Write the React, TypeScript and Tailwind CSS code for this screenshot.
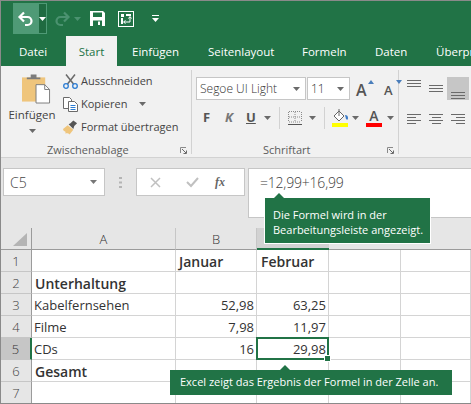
const ui = "font-['Open_Sans','Noto_Sans',sans-serif]";

const Caret = ({ color = "#6a6a6a" }: { color?: string }) => (
  <svg width="7" height="4" viewBox="0 0 7 4" className="shrink-0">
    <path d="M0 0h7L3.5 4z" fill={color} />
  </svg>
);

const Undo = ({ color, flip }: { color: string; flip?: boolean }) => (
  <svg width="17" height="16" viewBox="0 0 17 16" style={flip ? { transform: "scaleX(-1)" } : undefined}>
    <path d="M7 1.5 2.5 6 7 10.5M3 6h7.5a4 4 0 0 1 0 8H8" fill="none" stroke={color} strokeWidth="2.2" />
  </svg>
);

const SaveIcon = () => (
  <svg width="15" height="15" viewBox="0 0 15 15">
    <path fillRule="evenodd" fill="#fff" d="M0 0h13l2 2v13H0zM3 1.500v4.500h9V1.500zM3 9.500V15h9V9.500zM8 10.500h2V14H8z" />
  </svg>
);

const TouchIcon = () => (
  <svg width="16" height="16" viewBox="0 0 16 16">
    <rect x=".5" y=".5" width="15" height="15" fill="none" stroke="#fff" />
    <path d="M3 3h3v3H3zM8 3h5v2H8zM3 7h2v6H3z" fill="#fff" />
    <path d="M6 11h6V6M10.500 7.500 12 5.500l1.500 2M7.500 9.500 5.500 11l2 1.500" fill="none" stroke="#fff" />
  </svg>
);

const PasteIcon = () => (
  <svg width="29" height="30" viewBox="0 0 30 30">
    <path d="M0 3h24v25H0z" fill="#efc57c" />
    <path d="M5 5h14V3h-4V0H9v3H5z" fill="#7b7b7b" />
    <path d="M14.500 10.500h9l5 5v14h-14z" fill="#fff" stroke="#7b7b7b" />
    <path d="M23.500 10.500v5h5" fill="none" stroke="#7b7b7b" />
  </svg>
);

const ScissorsIcon = () => (
  <svg width="15" height="15" viewBox="0 0 15 15">
    <path d="M3 0.500 10.500 10M12 0.500 4.500 10" stroke="#6a6a6a" strokeWidth="1.500" fill="none" />
    <circle cx="3" cy="12" r="2.300" fill="none" stroke="#2b7cd3" strokeWidth="1.300" />
    <circle cx="12" cy="12" r="2.300" fill="none" stroke="#2b7cd3" strokeWidth="1.300" />
  </svg>
);

const CopyIcon = () => (
  <svg width="15" height="15" viewBox="0 0 15 15">
    <path d="M.5.500h6l2 2v9h-8z" fill="#fff" stroke="#6a6a6a" />
    <path d="M5.500 4.500h6l3 3v7h-9z" fill="#fff" stroke="#6a6a6a" />
    <path d="M7.500 8.500h5M7.500 10.500h5M7.500 12.500h5" stroke="#2b7cd3" />
  </svg>
);

const BrushIcon = () => (
  <svg width="16" height="15" viewBox="0 0 16 15">
    <path d="M0 9 5 5l6 5-4 5C5 13 3 14 2 14c1-1 1-2 0-2.500-.6-.3-1.500 0-2-2.500z" fill="#efc57c" />
    <path d="M6 4l2-1 3-3 4 3-3 3-1 3z" fill="#555" />
  </svg>
);

const Launcher = () => (
  <svg width="7" height="7" viewBox="0 0 7 7" className="shrink-0">
    <path d="M.5 6V.5H6" fill="none" stroke="#8a8a8a" />
    <path d="M2 2l4 4M3.500 6.500h3v-3" fill="none" stroke="#6a6a6a" />
  </svg>
);

const GrowIcon = ({ small }: { small?: boolean }) => (
  <div className="relative w-[18px] h-[18px] flex items-end">
    <span className={`${small ? "text-[13px]" : "text-[16px]"} leading-[16px] font-semibold text-[#555555]`}>A</span>
    <svg width="6" height="4" viewBox="0 0 6 4" className="absolute right-0 top-0">
      <path d={small ? "M0 0h6L3 4z" : "M0 4h6L3 0z"} fill="#4a7ebb" />
    </svg>
  </div>
);

const Lines = ({ rows }: { rows: number[][] }) => (
  <svg width="15" height="15" viewBox="0 0 15 15">
    {rows.map((r, i) => (
      <rect key={i} x={r[0]} y={r[1]} width={r[2]} height="1" fill="#6a6a6a" />
    ))}
  </svg>
);

const tabs = [
  { label: "Datei", w: "w-[65px]", pad: "pl-[18px]" },
  { label: "Start", w: "w-[51px]", pad: "justify-center" },
  { label: "Einfügen", w: "w-[91px]", pad: "pl-[15px]" },
  { label: "Seitenlayout", w: "w-[94px]", pad: "" },
  { label: "Formeln", w: "w-[73px]", pad: "" },
  { label: "Daten", w: "w-[61px]", pad: "" },
  { label: "Überprüfen", w: "w-[80px]", pad: "" },
];

const rowsData = [
  { n: "1", a: "", b: "Januar", c: "Februar", bold: true },
  { n: "2", a: "Unterhaltung", b: "", c: "", bold: true },
  { n: "3", a: "Kabelfernsehen", b: "52,98", c: "63,25" },
  { n: "4", a: "Filme", b: "7,98", c: "11,97" },
  { n: "5", a: "CDs", b: "16", c: "29,98", sel: true },
  { n: "6", a: "Gesamt", b: "", c: "", bold: true },
  { n: "7", a: "", b: "", c: "" },
];

const cell = "h-[22px] pt-[2px] border-r border-b border-[#d4d4d4] flex items-center text-[#333333] overflow-hidden whitespace-nowrap";

export default function App() {
  return (
    <div className={`${ui} relative w-[471px] h-[404px] overflow-hidden flex flex-col border-l border-t border-b border-[#8a8a8a] bg-[#e6e6e6]`}>
      {/* title bar */}
      <div className="bg-[#217346] h-[65px] shrink-0 flex flex-col">
        <div className="h-[35px] flex items-start pl-[12px] pt-[2px]">
          <div className="flex h-[31px]">
            <div className="w-[25px] bg-[#4f9a76] flex items-center justify-center"><Undo color="#ffffff" /></div>
            <div className="w-[9px] bg-[#1f6b41] border border-[#4f9a76] flex items-center justify-center"><Caret color="#ffffff" /></div>
          </div>
          <div className="flex items-center h-[31px] ml-[7px] gap-[3px]">
            <Undo color="#4b9270" flip />
            <Caret color="#4b9270" />
          </div>
          <div className="h-[31px] flex items-center ml-[9px]"><SaveIcon /></div>
          <div className="h-[31px] flex items-center ml-[13px]"><TouchIcon /></div>
          <div className="h-[31px] flex items-center ml-[18px]">
            <svg width="7" height="7" viewBox="0 0 7 7"><path d="M0 0h7v1H0zM0 3h7L3.500 7z" fill="#fff" /></svg>
          </div>
        </div>
        <div className="h-[30px] flex text-[11.5px]">
          {tabs.map((t) => (
            <div
              key={t.label}
              className={`${t.w} ${t.pad} shrink-0 flex items-center pt-[2px] whitespace-nowrap ${t.label === "Start" ? "bg-[#f1f1f1] text-[#217346]" : "text-white"}`}
            >
              {t.label}
            </div>
          ))}
        </div>
      </div>

      {/* ribbon */}
      <div className="h-[92px] shrink-0 bg-[#f1f1f1] border-b border-[#d2d2d2] flex text-[#444444]">
        {/* Zwischenablage */}
        <div className="w-[191px] shrink-0 flex flex-col border-r border-[#d2d2d2] mt-[4px] mb-[3px]">
          <div className="flex h-[72px] shrink-0">
            <div className="w-[62px] flex flex-col items-center">
              <div className="mt-[4px] ml-[8px]"><PasteIcon /></div>
              <div className="text-[11.5px] leading-[16px] mt-[3px]">Einfügen</div>
              <div className="mt-[6px]"><Caret /></div>
            </div>
            <div className="flex flex-col text-[11px] pt-[3px] gap-[7px] leading-[16px]">
              {[
                { icon: <ScissorsIcon />, label: "Ausschneiden" },
                { icon: <CopyIcon />, label: "Kopieren", caret: true },
                { icon: <BrushIcon />, label: "Format übertragen" },
              ].map((r) => (
                <div key={r.label} className="flex items-center gap-[3px] whitespace-nowrap">
                  <span className="w-[15px] flex justify-center">{r.icon}</span>
                  <span>{r.label}</span>
                  {r.caret && <span className="ml-[9px]"><Caret /></span>}
                </div>
              ))}
            </div>
          </div>
          <div className="h-[16px] shrink-0 flex items-center text-[11px] text-[#5c5c5c]">
            <span className="ml-[46px] w-[133px]">Zwischenablage</span>
            <Launcher />
          </div>
        </div>

        {/* Schriftart */}
        <div className="w-[207px] shrink-0 flex flex-col border-r border-[#d2d2d2] mt-[4px] mb-[3px] pl-[4px]">
          <div className="flex items-start h-[72px] shrink-0 flex-col">
            <div className="flex items-center mt-[7px] gap-[1px]">
              <div className="w-[110px] h-[23px] bg-white border border-[#c6c6c6] flex items-center justify-between pl-[3px] pr-[5px] text-[12px] text-[#333333] font-light whitespace-nowrap">
                <span>Segoe UI Light</span><Caret />
              </div>
              <div className="w-[43px] h-[23px] bg-white border border-[#c6c6c6] flex items-center justify-between pl-[3px] pr-[5px] text-[12px] text-[#333333] font-light">
                <span>11</span><Caret />
              </div>
              <div className="flex ml-[5px] gap-[10px]"><GrowIcon /><GrowIcon small /></div>
            </div>
            <div className="flex items-center mt-[4px] h-[28px] text-[#555555]">
              <span className="w-[15px] ml-[7px] text-[13px] font-bold">F</span>
              <span className="w-[15px] ml-[7px] text-[13px] font-bold italic text-[#777777]">K</span>
              <span className="w-[14px] ml-[6px] text-[13px] font-bold underline">U</span>
              <span className="ml-[4px]"><Caret /></span>
              <span className="ml-[8px] w-px h-[22px] bg-[#d2d2d2]" />
              <span className="ml-[8px]">
                <svg width="14" height="15" viewBox="0 0 14 15">
                  <path d="M.5 1v10M7 1v10M13.500 1v10M1 .5h12M1 6h12M1 11h12" stroke="#8a8a8a" strokeDasharray="1 1" fill="none" />
                  <path d="M0 13.500h14" stroke="#555" />
                </svg>
              </span>
              <span className="ml-[7px]"><Caret /></span>
              <span className="ml-[8px] w-px h-[22px] bg-[#d2d2d2]" />
              <span className="ml-[7px]">
                <svg width="17" height="18" viewBox="0 0 17 18">
                  <path d="M2 7l5-5 5 5-5 5z" fill="#fff" stroke="#666" />
                  <path d="M7 7V0" stroke="#666" />
                  <path d="M13 6c2 0 3 1 3 3s-1 2-2 1z" fill="#3d7cc9" />
                  <rect x="0" y="14" width="16" height="4" fill="#ffff00" />
                </svg>
              </span>
              <span className="ml-[3px]"><Caret /></span>
              <span className="ml-[7px] flex flex-col items-center w-[16px]">
                <span className="text-[14px] leading-[14px] font-semibold text-[#555555]">A</span>
                <span className="w-[16px] h-[4px] bg-[#ff0000]" />
              </span>
              <span className="ml-[5px]"><Caret /></span>
            </div>
          </div>
          <div className="h-[16px] shrink-0 flex items-center text-[11px] text-[#5c5c5c]">
            <span className="ml-[67px] w-[124px]">Schriftart</span>
            <Launcher />
          </div>
        </div>

        {/* Ausrichtung */}
        <div className="flex-1 pl-[8px] mt-[11px]">
          <div className="flex items-start h-[23px]">
            <div className="w-[22px] h-[23px] flex items-start pt-[2px]"><Lines rows={[[0, 1, 14], [0, 4, 14], [0, 7, 14]]} /></div>
            <div className="w-[18px] h-[23px] flex items-center"><Lines rows={[[0, 4, 14], [0, 7, 14], [0, 10, 14]]} /></div>
            <div className="w-[22px] h-[23px] bg-[#c6c6c6] flex items-end justify-center"><Lines rows={[[0, 7, 14], [0, 10, 14], [0, 13, 14]]} /></div>
          </div>
          <div className="flex items-start mt-[12px]">
            <div className="w-[22px]"><Lines rows={[[0, 2, 14], [0, 5, 9], [0, 8, 14], [0, 11, 9]]} /></div>
            <div className="w-[18px]"><Lines rows={[[0, 2, 14], [3, 5, 9], [0, 8, 14], [3, 11, 9]]} /></div>
            <div className="w-[22px] flex justify-center"><Lines rows={[[0, 2, 14], [5, 5, 9], [0, 8, 14], [5, 11, 9]]} /></div>
          </div>
        </div>
      </div>

      {/* formula bar */}
      <div className="h-[70px] shrink-0 flex items-start pt-[10px] bg-[#e6e6e6]">
        <div className="ml-[2px] w-[102px] h-[28px] bg-white border border-[#c6c6c6] flex items-center justify-between pl-[6px] pr-[7px] text-[14px] font-light text-[#444444]">
          <span>C5</span><Caret color="#777777" />
        </div>
        <div className="w-[31px] h-[28px] flex items-center justify-center">
          <svg width="3" height="11" viewBox="0 0 3 11"><path d="M0 0h3v2H0zM0 4.500h3v2H0zM0 9h3v2H0z" fill="#b4b4b4" /></svg>
        </div>
        <div className="w-[109px] h-[28px] bg-white border border-[#c6c6c6] flex items-center pl-[13px]">
          <svg width="11" height="11" viewBox="0 0 11 11"><path d="M1 1l9 9M10 1l-9 9" stroke="#c0c0c0" strokeWidth="1.500" /></svg>
          <svg width="13" height="11" viewBox="0 0 13 11" className="ml-[25px]"><path d="M1 5l4 4 7-8" fill="none" stroke="#c0c0c0" strokeWidth="2" /></svg>
          <span className="ml-[16px] font-['Liberation_Serif',serif] italic text-[12px] font-bold text-[#666666]">fx</span>
        </div>
        <div className="ml-[3px] flex-1 h-[50px] bg-white border-t border-l border-b border-[#c6c6c6] pl-[11px] pt-[4px] text-[14px] font-light tracking-[-0.2px] leading-[20px] text-[#404040]">
          =12,99+16,99
        </div>
      </div>

      {/* sheet */}
      <div className="flex-1 bg-white grid grid-cols-[31px_144px_81px_72px_72px_1fr] content-start">
        <div className="h-[22px] bg-[#e6e6e6] border-b border-r border-[#9b9b9b] flex items-end justify-end pr-[4px] pb-[3px]">
          <svg width="14" height="13" viewBox="0 0 14 13"><path d="M14 0v13H0z" fill="#b4b4b4" /></svg>
        </div>
        <div className="h-[22px] pt-[2px] bg-[#e6e6e6] border-b border-r border-b-[#9b9b9b] border-r-[#c6c6c6] flex items-center justify-center text-[13px] font-light text-[#333333]">A</div>
        <div className="h-[22px] pt-[2px] bg-[#e6e6e6] border-b border-r border-b-[#9b9b9b] border-r-[#c6c6c6] flex items-center justify-center text-[13px] font-light text-[#333333]">B</div>
        {/* the C letter sits under the callout */}
        <div className="h-[22px] bg-[#d2d2d2] border-b-2 border-[#217346]" />
        <div className="h-[22px] bg-[#e6e6e6] border-b border-[#9b9b9b]" />
        <div className="h-[22px] bg-[#e6e6e6] border-b border-[#9b9b9b]" />
        {rowsData.map((r) => (
          <div key={r.n} className="contents">
            <div className={`h-[22px] pt-[2px] border-b border-r flex items-center justify-center text-[13px] font-light border-b-[#c6c6c6] ${r.sel ? "bg-[#c6c6c6] border-r-2 border-r-[#217346] text-[#333333]" : "bg-[#e6e6e6] border-r-[#9b9b9b] text-[#444444]"}`}>
              {r.n}
            </div>
            <div className={`${cell} ${r.bold ? "pl-[3px] text-[14px] font-semibold" : "pl-[2px] text-[13px]"}`}>{r.a}</div>
            <div className={`${cell} ${r.n === "1" ? "pl-[3px] text-[14px] font-semibold" : "justify-end pr-[2px] text-[13px]"}`}>{r.b}</div>
            <div className={`${cell} ${r.n === "1" ? "pl-[4px] text-[14px] font-semibold" : "justify-end pr-[2px] text-[13px]"} ${r.sel ? "relative overflow-visible" : ""}`}>
              {r.c}
              {r.sel && (
                <>
                  <span className="absolute -left-px -top-px -right-px -bottom-px border-2 border-[#217346]" />
                  <span className="absolute -right-[3px] -bottom-[3px] w-[5px] h-[5px] bg-[#217346] border border-white box-content" />
                </>
              )}
            </div>
            <div className={cell} />
            <div className={cell} />
          </div>
        ))}
      </div>

      {/* callouts */}
      <div className="absolute left-[263px] top-[196px] w-[167px] h-[47px] bg-[#217346] border border-white pl-[8px] pt-[9px] text-[11px] leading-[15px] text-white whitespace-nowrap">
        <span className="absolute left-[9px] -top-[5px] w-0 h-0 border-x-[5px] border-x-transparent border-b-[5px] border-b-[#217346]" />
        Die Formel wird in der<br />Bearbeitungsleiste angezeigt.
      </div>
      <div className="absolute left-[169px] top-[369px] w-[282px] h-[25px] bg-[#217346] flex items-center pl-[10px] text-[11px] text-white whitespace-nowrap">
        <span className="absolute left-[110px] -top-[5px] w-0 h-0 border-x-[5px] border-x-transparent border-b-[5px] border-b-[#217346]" />
        Excel zeigt das Ergebnis der Formel in der Zelle an.
      </div>
    </div>
  );
}
